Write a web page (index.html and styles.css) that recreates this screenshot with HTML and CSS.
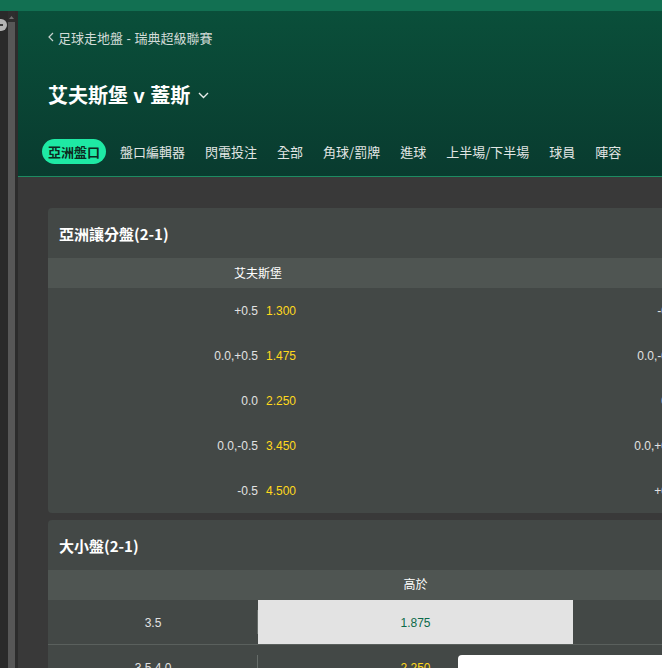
FILE: index.html
```html
<!DOCTYPE html>
<html lang="zh-Hant">
<head>
<meta charset="utf-8">
<title>艾夫斯堡 v 蓋斯</title>
<link rel="stylesheet" href="styles.css">
</head>
<body>
<div class="topbar"></div>
<div class="frame">
  <aside class="gutter">
    <div class="gutter-a">
      <svg class="gutter-icon" width="8" height="14" viewBox="0 0 8 14"><circle cx="1" cy="7" r="6" fill="#b5b5b5"/><rect x="-1" y="6" width="4" height="2" fill="#3a3a3a"/></svg>
    </div>
    <div class="gutter-b">
      <div class="scroll-cap"><svg width="7" height="6" viewBox="0 0 7 6"><path d="M1 5 L3.5 2 L6 5 Z" fill="#6f6f6f"/></svg></div>
      <div class="scroll-track"></div>
    </div>
    <div class="gutter-c"></div>
  </aside>
  <main class="main">
    <header class="event-header">
      <nav class="crumb">
        <svg class="crumb-chev" width="6" height="10" viewBox="0 0 6 10"><path d="M5 1 L1 5 L5 9" fill="none" stroke="#c9d3cf" stroke-width="1.2"/></svg>
        <span>足球走地盤 - 瑞典超級聯賽</span>
      </nav>
      <h1 class="title">艾夫斯堡 v 蓋斯
        <svg class="title-chev" width="11" height="7" viewBox="0 0 11 7"><path d="M1 1 L5.5 5.5 L10 1" fill="none" stroke="#e6ece9" stroke-width="1.4"/></svg>
      </h1>
      <ul class="tabs">
        <li class="tab active">亞洲盤口</li>
        <li class="tab">盤口編輯器</li>
        <li class="tab">閃電投注</li>
        <li class="tab">全部</li>
        <li class="tab">角球/罰牌</li>
        <li class="tab">進球</li>
        <li class="tab">上半場/下半場</li>
        <li class="tab">球員</li>
        <li class="tab">陣容</li>
      </ul>
    </header>
    <section class="markets">
      <div class="card">
        <div class="card-title">亞洲讓分盤(2-1)</div>
        <div class="ah-head">
          <div class="ah-col">艾夫斯堡</div>
          <div class="ah-col">蓋斯</div>
        </div>
        <div class="ah-row">
          <div class="ah-cell"><span class="hcp">+0.5</span><span class="odds">1.300</span></div>
          <div class="ah-cell"><span class="hcp">-0.5</span><span class="odds">3.300</span></div>
        </div>
        <div class="ah-row">
          <div class="ah-cell"><span class="hcp">0.0,+0.5</span><span class="odds">1.475</span></div>
          <div class="ah-cell"><span class="hcp">0.0,-0.5</span><span class="odds">2.550</span></div>
        </div>
        <div class="ah-row">
          <div class="ah-cell"><span class="hcp">0.0</span><span class="odds">2.250</span></div>
          <div class="ah-cell"><span class="hcp">0.0</span><span class="odds">1.610</span></div>
        </div>
        <div class="ah-row">
          <div class="ah-cell"><span class="hcp">0.0,-0.5</span><span class="odds">3.450</span></div>
          <div class="ah-cell"><span class="hcp">0.0,+0.5</span><span class="odds">1.300</span></div>
        </div>
        <div class="ah-row">
          <div class="ah-cell"><span class="hcp">-0.5</span><span class="odds">4.500</span></div>
          <div class="ah-cell"><span class="hcp">+0.5</span><span class="odds">1.190</span></div>
        </div>
      </div>
      <div class="card">
        <div class="card-title">大小盤(2-1)</div>
        <div class="ou-head">
          <div class="ou-label"></div>
          <div class="ou-col">高於</div>
          <div class="ou-col">低於</div>
        </div>
        <div class="ou-row">
          <div class="ou-label">3.5</div>
          <div class="ou-sep"></div>
          <div class="ou-odds selected">1.875</div>
          <div class="ou-odds">1.925</div>
        </div>
        <div class="ou-row">
          <div class="ou-label">3.5,4.0</div>
          <div class="ou-sep"></div>
          <div class="ou-odds">2.250</div>
          <div class="ou-odds">1.610</div>
        </div>
      </div>
    </section>
  </main>
</div>
<div class="popup"></div>
</body>
</html>
```

FILE: styles.css
```css
* { box-sizing: border-box; }
html, body {
  margin: 0;
  padding: 0;
  height: 100%;
  overflow: hidden;
}
body {
  background: #393939;
  font-family: "Liberation Sans", "Noto Sans CJK TC", sans-serif;
  color: #e4e4e4;
  display: flex;
  flex-direction: column;
}
.topbar {
  height: 11px;
  flex: none;
  background: #127052;
}
.frame {
  flex: 1;
  display: flex;
  min-height: 0;
}
.gutter {
  width: 18px;
  flex: none;
  display: flex;
}
.gutter-a {
  width: 8px;
  background: #2a2a2a;
  padding-top: 7px;
}
.gutter-icon { display: block; }
.gutter-b {
  width: 7px;
  display: flex;
  flex-direction: column;
  background: #2e2e2e;
}
.scroll-cap {
  height: 11px;
  display: flex;
  align-items: center;
  justify-content: center;
}
.scroll-cap svg { display: block; }
.scroll-track {
  flex: 1;
  background: #575757;
}
.gutter-c {
  width: 3px;
  background: #2c2c2c;
}
.main {
  flex: 1;
  min-width: 0;
  overflow: hidden;
}
.event-header {
  height: 166px;
  background: linear-gradient(180deg, #0a4f3a 0%, #093b2f 100%);
  border-bottom: 1px solid #1d8b62;
  padding: 17px 0 0 30px;
}
.crumb {
  display: flex;
  align-items: center;
  height: 18px;
  font-size: 13px;
  color: #d2dbd7;
}
.crumb-chev { margin-right: 4px; }
.title {
  margin: 34px 0 0 0;
  height: 28px;
  display: flex;
  align-items: center;
  font-size: 20px;
  font-weight: bold;
  color: #ffffff;
  white-space: nowrap;
}
.title-chev { margin-left: 8px; margin-top: 2px; }
.tabs {
  list-style: none;
  margin: 31px 0 0 -6px;
  padding: 0;
  display: flex;
  gap: 8px;
  white-space: nowrap;
  font-family: "Noto Sans CJK TC", "Liberation Sans", sans-serif;
}
.tab {
  height: 25px;
  line-height: 25px;
  padding: 0 6px;
  font-size: 13px;
  color: #e2e6e4;
  border-radius: 13px;
}
.tab.active {
  background: #1ee9a4;
  color: #0d2a20;
  font-weight: bold;
}
.markets {
  padding: 31px 0 0 30px;
  display: flex;
  flex-direction: column;
  gap: 7px;
}
.card {
  width: 840px;
  background: #434846;
  border-radius: 4px;
  overflow: hidden;
}
.card-title {
  height: 50px;
  display: flex;
  align-items: center;
  padding: 1px 0 0 11px;
  font-size: 15px;
  font-weight: bold;
  color: #ffffff;
  font-family: "Noto Sans CJK TC", "Liberation Sans", sans-serif;
}
.ah-head, .ou-head {
  display: flex;
  height: 30px;
  background: #4f5552;
  font-size: 12px;
  color: #ffffff;
}
.ah-col {
  width: 420px;
  display: flex;
  align-items: center;
  justify-content: center;
  padding-bottom: 2px;
}
.ah-row {
  display: flex;
  height: 45px;
}
.ah-cell {
  width: 420px;
  display: grid;
  grid-template-columns: 1fr 1fr;
  align-items: center;
  font-size: 12px;
  padding-top: 1px;
}
.hcp {
  text-align: right;
  color: #e2e2e2;
}
.odds {
  padding-left: 8px;
  color: #ffd91c;
}
.ou-label {
  width: 210px;
  flex: none;
  display: flex;
  align-items: center;
  justify-content: center;
  font-size: 12px;
  color: #e2e2e2;
  padding-top: 2px;
}
.ou-head .ou-label { padding-top: 0; }
.ou-col {
  width: 315px;
  display: flex;
  align-items: center;
  justify-content: center;
  padding-bottom: 3px;
}
.ou-row {
  display: flex;
  height: 45px;
  border-bottom: 1px solid #5a605d;
}
.ou-sep {
  width: 1px;
  height: 24px;
  align-self: center;
  margin-left: -1px;
  background: #666c69;
}
.ou-odds {
  width: 315px;
  display: flex;
  align-items: center;
  justify-content: center;
  font-size: 12px;
  color: #ffd91c;
  padding-top: 2px;
}
.ou-odds.selected {
  background: #e3e3e3;
  color: #0c6a4a;
}
.popup {
  position: fixed;
  left: 458px;
  top: 655px;
  width: 260px;
  height: 60px;
  background: #ffffff;
  border-radius: 4px 0 0 0;
}
```
